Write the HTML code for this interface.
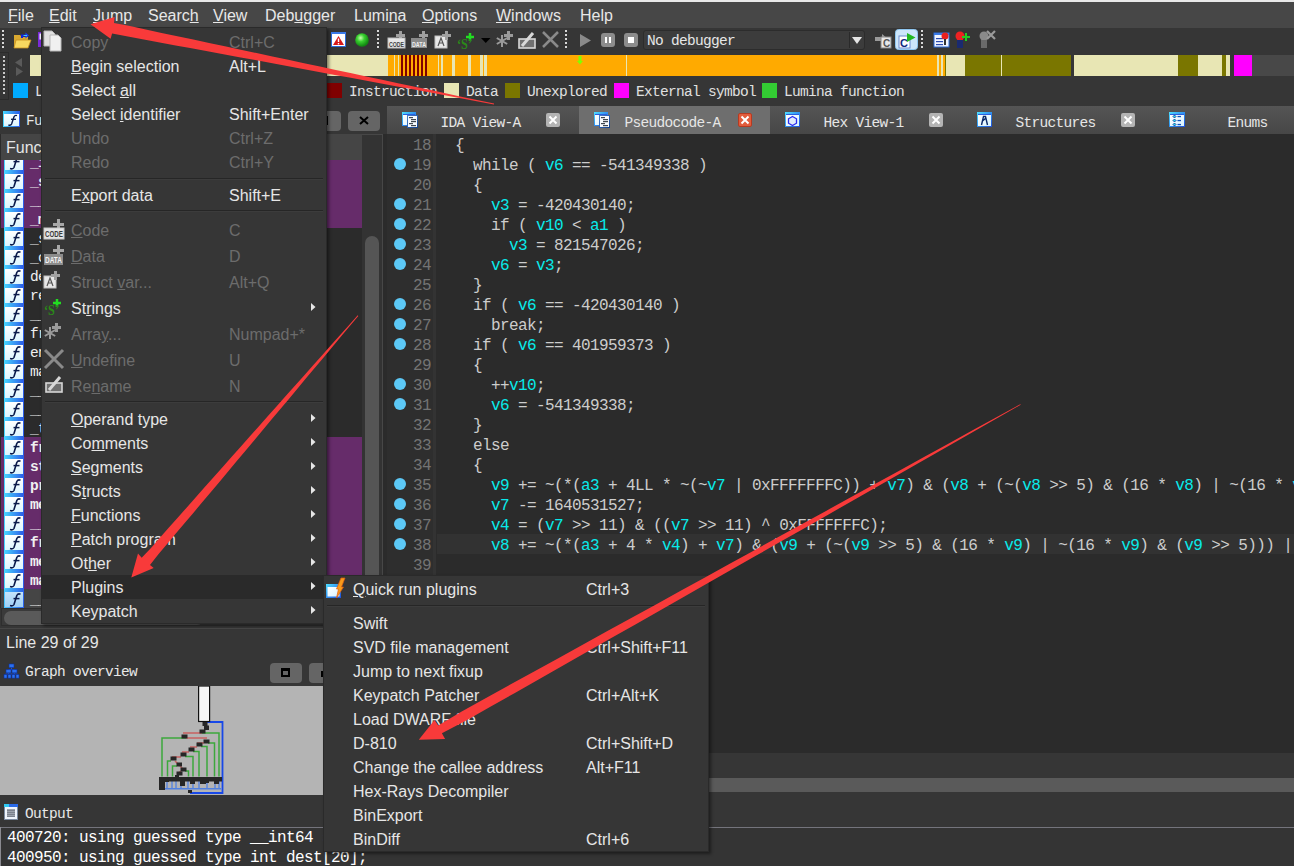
<!DOCTYPE html><html><head><meta charset="utf-8"><style>
*{margin:0;padding:0;box-sizing:border-box}
html,body{width:1294px;height:866px;overflow:hidden;background:#363636;font-family:"Liberation Sans",sans-serif}
.a{position:absolute}
.t{position:absolute;white-space:pre;line-height:20px}
.mono{font-family:"Liberation Mono",monospace}
.ui{font-family:"Liberation Mono",monospace;font-size:14.5px;letter-spacing:-0.7px}
.om{font-family:"Liberation Mono",monospace;font-size:16px;letter-spacing:-0.6px}
.u{text-decoration:underline;text-underline-offset:1px}
.mi{position:absolute;white-space:pre;font-size:16px;line-height:24px;color:#e6e6e6}
.dis{color:#6c6c6c}
.code{position:absolute;white-space:pre;font-family:"Liberation Mono",monospace;font-size:16px;letter-spacing:-0.6px;line-height:20px;color:#cdcdcd}
.v{color:#08eaea}
.ln{position:absolute;white-space:pre;font-family:"Liberation Mono",monospace;font-size:16px;letter-spacing:-0.6px;line-height:20px;color:#747474;text-align:right;width:46px}
.dot{position:absolute;width:12px;height:12px;border-radius:50%;background:#5cc8f6}
.sq{position:absolute;width:15px;height:15px}
.lg{position:absolute;white-space:pre;font-family:"Liberation Mono",monospace;font-size:14.5px;letter-spacing:-0.7px;line-height:20px;color:#e0e0e0}
</style></head><body>
<div class="a" style="left:0px;top:0px;width:1294px;height:2px;background:#e9e9e9;"></div>
<div class="a" style="left:0px;top:2px;width:1294px;height:26px;background:#474747;"></div>
<div class="mi" style="left:8px;top:4px;color:#e8e8e8"><span class="u">F</span>ile</div>
<div class="mi" style="left:49px;top:4px;color:#e8e8e8"><span class="u">E</span>dit</div>
<div class="mi" style="left:93px;top:4px;color:#e8e8e8"><span class="u">J</span>ump</div>
<div class="mi" style="left:148px;top:4px;color:#e8e8e8">Searc<span class="u">h</span></div>
<div class="mi" style="left:213px;top:4px;color:#e8e8e8"><span class="u">V</span>iew</div>
<div class="mi" style="left:265px;top:4px;color:#e8e8e8">Deb<span class="u">u</span>gger</div>
<div class="mi" style="left:354px;top:4px;color:#e8e8e8">Lumi<span class="u">n</span>a</div>
<div class="mi" style="left:422px;top:4px;color:#e8e8e8"><span class="u">O</span>ptions</div>
<div class="mi" style="left:496px;top:4px;color:#e8e8e8"><span class="u">W</span>indows</div>
<div class="mi" style="left:580px;top:4px;color:#e8e8e8">Help</div>
<div class="a" style="left:0px;top:28px;width:1294px;height:27px;background:#363636;"></div>
<div class="a" style="left:0px;top:55px;width:1294px;height:21px;background:#363636;"></div>
<div class="a" style="left:0px;top:52px;width:9px;height:48px;background:#363636;border:1px solid #2c2c2c;border-left:none"></div>
<div class="a" style="left:3px;top:56px;width:2px;height:40px;background:repeating-linear-gradient(#c8c8c8 0 2px,transparent 2px 4px)"></div>
<div class="a" style="left:30px;top:55px;width:358px;height:21px;background:#e8e6b4;"></div>
<div class="a" style="left:388px;top:55px;width:557px;height:21px;background:#ffaa00;"></div>
<div class="a" style="left:945px;top:55px;width:1px;height:21px;background:#7a7600;"></div>
<div class="a" style="left:946px;top:55px;width:19px;height:21px;background:#e8e6b4;"></div>
<div class="a" style="left:965px;top:55px;width:106px;height:21px;background:#7a7600;"></div>
<div class="a" style="left:1074px;top:55px;width:104px;height:21px;background:#e8e6b4;"></div>
<div class="a" style="left:1178px;top:55px;width:20px;height:21px;background:#7a7600;"></div>
<div class="a" style="left:1198px;top:55px;width:24px;height:21px;background:#e8e6b4;"></div>
<div class="a" style="left:1222px;top:55px;width:4px;height:21px;background:#7a7600;"></div>
<div class="a" style="left:1226px;top:55px;width:4px;height:21px;background:#e8e6b4;"></div>
<div class="a" style="left:1234px;top:55px;width:18px;height:21px;background:#ff00ff;"></div>
<div class="a" style="left:1252px;top:55px;width:42px;height:21px;background:#484848;"></div>
<div class="a" style="left:394px;top:55px;width:1px;height:21px;background:#e8e6b4;"></div>
<div class="a" style="left:398px;top:55px;width:1px;height:21px;background:#e8e6b4;"></div>
<div class="a" style="left:438px;top:55px;width:1px;height:21px;background:#e8e6b4;"></div>
<div class="a" style="left:440.5px;top:55px;width:2.5px;height:21px;background:#e8e6b4;"></div>
<div class="a" style="left:452px;top:55px;width:3px;height:21px;background:#e8e6b4;"></div>
<div class="a" style="left:468px;top:55px;width:3px;height:21px;background:#e8e6b4;"></div>
<div class="a" style="left:480px;top:55px;width:3px;height:21px;background:#e8e6b4;"></div>
<div class="a" style="left:484px;top:55px;width:3px;height:21px;background:#e8e6b4;"></div>
<div class="a" style="left:626px;top:55px;width:1px;height:21px;background:#e8e6b4;"></div>
<div class="a" style="left:937px;top:55px;width:2px;height:21px;background:#e8e6b4;"></div>
<div class="a" style="left:941px;top:55px;width:1.5px;height:21px;background:#e8e6b4;"></div>
<div class="a" style="left:1001px;top:55px;width:1px;height:21px;background:#e8e6b4;"></div>
<div class="a" style="left:401px;top:55px;width:2px;height:21px;background:#800000;"></div>
<div class="a" style="left:405px;top:55px;width:2px;height:21px;background:#800000;"></div>
<div class="a" style="left:409px;top:55px;width:2px;height:21px;background:#800000;"></div>
<div class="a" style="left:413px;top:55px;width:2px;height:21px;background:#800000;"></div>
<div class="a" style="left:417px;top:55px;width:2px;height:21px;background:#800000;"></div>
<div class="a" style="left:421px;top:55px;width:2px;height:21px;background:#800000;"></div>
<div class="a" style="left:425px;top:55px;width:2px;height:21px;background:#800000;"></div>
<svg class="a" style="left:576px;top:55px" width="8" height="10"><path d="M2.5 1 H5.5 V6 H7 L4 9.5 L1 6 H2.5Z" fill="#80ff00"/></svg>
<svg class="a" style="left:12px;top:56px" width="14" height="20"><path d="M10 2 L3 6.5 L10 11Z" fill="#5a5a5a"/><path d="M4 11 L11 15.5 L4 20Z" fill="#5a5a5a"/></svg>
<div class="sq" style="left:13px;top:83px;background:#00aaff"></div>
<div class="lg" style="left:35px;top:82px">Library function</div>
<div class="sq" style="left:327px;top:83px;background:#800000"></div>
<div class="lg" style="left:349px;top:82px">Instruction</div>
<div class="sq" style="left:444px;top:83px;background:#e8e6b4"></div>
<div class="lg" style="left:466px;top:82px">Data</div>
<div class="sq" style="left:505px;top:83px;background:#7a7600"></div>
<div class="lg" style="left:527px;top:82px">Unexplored</div>
<div class="sq" style="left:614px;top:83px;background:#ff00ff"></div>
<div class="lg" style="left:636px;top:82px">External symbol</div>
<div class="sq" style="left:762px;top:83px;background:#33cc33"></div>
<div class="lg" style="left:784px;top:82px">Lumina function</div>
<div class="a" style="left:0px;top:106px;width:387px;height:28px;background:#363636;"></div>
<div class="a" style="left:3px;top:111px;width:17px;height:16px;background:linear-gradient(90deg,#48d8ff,#2a5ae8)"><div class="a" style="left:1px;top:3px;width:15px;height:12px;background:linear-gradient(#ffffff,#dcf6ff)"></div></div>
<svg class="a" style="left:3px;top:111px" width="17" height="16"><path d="M14 4.6 Q12 3.8 11 5.8 L8.6 13 Q7.8 14.8 5.4 14" stroke="#0a1a4a" stroke-width="1.4" fill="none"/><path d="M8 8.3 H13" stroke="#0a1a4a" stroke-width="1.3"/></svg>
<div class="t ui" style="left:26px;top:111px;color:#e8e8e8">Functions</div>
<div class="a" style="left:270px;top:111px;width:71px;height:20px;background:#656565;border-radius:4px"></div>
<div class="a" style="left:348px;top:111px;width:32px;height:20px;background:#656565;border-radius:4px"></div>
<svg class="a" style="left:0;top:100px" width="400" height="40" viewBox="0 100 400 40"><rect x="318" y="117" width="9" height="7" fill="none" stroke="#000" stroke-width="2"/><path d="M360 117 L368 124 M368 117 L360 124" stroke="#000" stroke-width="2"/></svg>
<div class="a" style="left:0px;top:134px;width:383px;height:475px;background:#2b2b2b;"></div>
<div class="a" style="left:1px;top:134px;width:361px;height:26px;background:#454545;"></div>
<div class="t" style="left:6px;top:138px;font-size:16px;color:#e6e6e6">Function name</div>
<div class="a" style="left:362px;top:134px;width:21px;height:475px;background:#333333;border:1px solid #474747;border-left:none"></div>
<div class="a" style="left:365px;top:236px;width:14px;height:370px;background:#555555;border-radius:7px"></div>
<div class="a" style="left:1px;top:160px;width:361px;height:11px;background:#662c6a;"></div>
<div class="a" style="left:1px;top:171px;width:361px;height:19px;background:#662c6a;"></div>
<div class="a" style="left:1px;top:190px;width:361px;height:19px;background:#662c6a;"></div>
<div class="a" style="left:1px;top:209px;width:361px;height:19px;background:#662c6a;"></div>
<div class="a" style="left:1px;top:437px;width:361px;height:19px;background:#662c6a;"></div>
<div class="a" style="left:1px;top:456px;width:361px;height:19px;background:#662c6a;"></div>
<div class="a" style="left:1px;top:475px;width:361px;height:19px;background:#662c6a;"></div>
<div class="a" style="left:1px;top:494px;width:361px;height:19px;background:#662c6a;"></div>
<div class="a" style="left:1px;top:513px;width:361px;height:19px;background:#662c6a;"></div>
<div class="a" style="left:1px;top:532px;width:361px;height:19px;background:#662c6a;"></div>
<div class="a" style="left:1px;top:551px;width:361px;height:19px;background:#662c6a;"></div>
<div class="a" style="left:1px;top:570px;width:361px;height:19px;background:#662c6a;"></div>
<div class="a" style="left:1px;top:589px;width:361px;height:19px;background:#454545;"></div>
<div class="a" style="left:0;top:160px;width:362px;height:449px;overflow:hidden">
<div class="a" style="left:4px;top:-8px;width:20px;height:19px;background:linear-gradient(90deg,#48d8ff,#2a5ae8)"><div class="a" style="left:1px;top:3px;width:18px;height:15px;background:linear-gradient(#ffffff,#dcf6ff)"></div></div>
<svg class="a" style="left:4px;top:-8px" width="20" height="19"><path d="M16.5 5.2 Q14 4.2 12.8 6.5 L10 15.5 Q9 17.5 6 16.6" stroke="#0a1a4a" stroke-width="1.6" fill="none"/><path d="M9.5 9.6 H15.5" stroke="#0a1a4a" stroke-width="1.5"/></svg>
<div class="t ui" style="left:30px;top:-6px;line-height:19px;color:#f0f0f0;font-weight:bold;">_init_proc</div>
<div class="a" style="left:4px;top:11px;width:20px;height:19px;background:linear-gradient(90deg,#48d8ff,#2a5ae8)"><div class="a" style="left:1px;top:3px;width:18px;height:15px;background:linear-gradient(#ffffff,#dcf6ff)"></div></div>
<svg class="a" style="left:4px;top:11px" width="20" height="19"><path d="M16.5 5.2 Q14 4.2 12.8 6.5 L10 15.5 Q9 17.5 6 16.6" stroke="#0a1a4a" stroke-width="1.6" fill="none"/><path d="M9.5 9.6 H15.5" stroke="#0a1a4a" stroke-width="1.5"/></svg>
<div class="t ui" style="left:30px;top:13px;line-height:19px;color:#f0f0f0;font-weight:bold;">_strlen</div>
<div class="a" style="left:4px;top:30px;width:20px;height:19px;background:linear-gradient(90deg,#48d8ff,#2a5ae8)"><div class="a" style="left:1px;top:3px;width:18px;height:15px;background:linear-gradient(#ffffff,#dcf6ff)"></div></div>
<svg class="a" style="left:4px;top:30px" width="20" height="19"><path d="M16.5 5.2 Q14 4.2 12.8 6.5 L10 15.5 Q9 17.5 6 16.6" stroke="#0a1a4a" stroke-width="1.6" fill="none"/><path d="M9.5 9.6 H15.5" stroke="#0a1a4a" stroke-width="1.5"/></svg>
<div class="t ui" style="left:30px;top:32px;line-height:19px;color:#f0f0f0;font-weight:bold;">__libc_start_main</div>
<div class="a" style="left:4px;top:49px;width:20px;height:19px;background:linear-gradient(90deg,#48d8ff,#2a5ae8)"><div class="a" style="left:1px;top:3px;width:18px;height:15px;background:linear-gradient(#ffffff,#dcf6ff)"></div></div>
<svg class="a" style="left:4px;top:49px" width="20" height="19"><path d="M16.5 5.2 Q14 4.2 12.8 6.5 L10 15.5 Q9 17.5 6 16.6" stroke="#0a1a4a" stroke-width="1.6" fill="none"/><path d="M9.5 9.6 H15.5" stroke="#0a1a4a" stroke-width="1.5"/></svg>
<div class="t ui" style="left:30px;top:51px;line-height:19px;color:#f0f0f0;font-weight:bold;">_memset</div>
<div class="a" style="left:4px;top:68px;width:20px;height:19px;background:linear-gradient(90deg,#48d8ff,#2a5ae8)"><div class="a" style="left:1px;top:3px;width:18px;height:15px;background:linear-gradient(#ffffff,#dcf6ff)"></div></div>
<svg class="a" style="left:4px;top:68px" width="20" height="19"><path d="M16.5 5.2 Q14 4.2 12.8 6.5 L10 15.5 Q9 17.5 6 16.6" stroke="#0a1a4a" stroke-width="1.6" fill="none"/><path d="M9.5 9.6 H15.5" stroke="#0a1a4a" stroke-width="1.5"/></svg>
<div class="t ui" style="left:30px;top:70px;line-height:19px;color:#f0f0f0;">_strcpy</div>
<div class="a" style="left:4px;top:87px;width:20px;height:19px;background:linear-gradient(90deg,#48d8ff,#2a5ae8)"><div class="a" style="left:1px;top:3px;width:18px;height:15px;background:linear-gradient(#ffffff,#dcf6ff)"></div></div>
<svg class="a" style="left:4px;top:87px" width="20" height="19"><path d="M16.5 5.2 Q14 4.2 12.8 6.5 L10 15.5 Q9 17.5 6 16.6" stroke="#0a1a4a" stroke-width="1.6" fill="none"/><path d="M9.5 9.6 H15.5" stroke="#0a1a4a" stroke-width="1.5"/></svg>
<div class="t ui" style="left:30px;top:89px;line-height:19px;color:#f0f0f0;">_calloc</div>
<div class="a" style="left:4px;top:106px;width:20px;height:19px;background:linear-gradient(90deg,#48d8ff,#2a5ae8)"><div class="a" style="left:1px;top:3px;width:18px;height:15px;background:linear-gradient(#ffffff,#dcf6ff)"></div></div>
<svg class="a" style="left:4px;top:106px" width="20" height="19"><path d="M16.5 5.2 Q14 4.2 12.8 6.5 L10 15.5 Q9 17.5 6 16.6" stroke="#0a1a4a" stroke-width="1.6" fill="none"/><path d="M9.5 9.6 H15.5" stroke="#0a1a4a" stroke-width="1.5"/></svg>
<div class="t ui" style="left:30px;top:108px;line-height:19px;color:#f0f0f0;">deregister_tm_clones</div>
<div class="a" style="left:4px;top:125px;width:20px;height:19px;background:linear-gradient(90deg,#48d8ff,#2a5ae8)"><div class="a" style="left:1px;top:3px;width:18px;height:15px;background:linear-gradient(#ffffff,#dcf6ff)"></div></div>
<svg class="a" style="left:4px;top:125px" width="20" height="19"><path d="M16.5 5.2 Q14 4.2 12.8 6.5 L10 15.5 Q9 17.5 6 16.6" stroke="#0a1a4a" stroke-width="1.6" fill="none"/><path d="M9.5 9.6 H15.5" stroke="#0a1a4a" stroke-width="1.5"/></svg>
<div class="t ui" style="left:30px;top:127px;line-height:19px;color:#f0f0f0;">register_tm_clones</div>
<div class="a" style="left:4px;top:144px;width:20px;height:19px;background:linear-gradient(90deg,#48d8ff,#2a5ae8)"><div class="a" style="left:1px;top:3px;width:18px;height:15px;background:linear-gradient(#ffffff,#dcf6ff)"></div></div>
<svg class="a" style="left:4px;top:144px" width="20" height="19"><path d="M16.5 5.2 Q14 4.2 12.8 6.5 L10 15.5 Q9 17.5 6 16.6" stroke="#0a1a4a" stroke-width="1.6" fill="none"/><path d="M9.5 9.6 H15.5" stroke="#0a1a4a" stroke-width="1.5"/></svg>
<div class="t ui" style="left:30px;top:146px;line-height:19px;color:#f0f0f0;">__do_global_dtors_aux</div>
<div class="a" style="left:4px;top:163px;width:20px;height:19px;background:linear-gradient(90deg,#48d8ff,#2a5ae8)"><div class="a" style="left:1px;top:3px;width:18px;height:15px;background:linear-gradient(#ffffff,#dcf6ff)"></div></div>
<svg class="a" style="left:4px;top:163px" width="20" height="19"><path d="M16.5 5.2 Q14 4.2 12.8 6.5 L10 15.5 Q9 17.5 6 16.6" stroke="#0a1a4a" stroke-width="1.6" fill="none"/><path d="M9.5 9.6 H15.5" stroke="#0a1a4a" stroke-width="1.5"/></svg>
<div class="t ui" style="left:30px;top:165px;line-height:19px;color:#f0f0f0;">frame_dummy</div>
<div class="a" style="left:4px;top:182px;width:20px;height:19px;background:linear-gradient(90deg,#48d8ff,#2a5ae8)"><div class="a" style="left:1px;top:3px;width:18px;height:15px;background:linear-gradient(#ffffff,#dcf6ff)"></div></div>
<svg class="a" style="left:4px;top:182px" width="20" height="19"><path d="M16.5 5.2 Q14 4.2 12.8 6.5 L10 15.5 Q9 17.5 6 16.6" stroke="#0a1a4a" stroke-width="1.6" fill="none"/><path d="M9.5 9.6 H15.5" stroke="#0a1a4a" stroke-width="1.5"/></svg>
<div class="t ui" style="left:30px;top:184px;line-height:19px;color:#f0f0f0;">encrypt</div>
<div class="a" style="left:4px;top:201px;width:20px;height:19px;background:linear-gradient(90deg,#48d8ff,#2a5ae8)"><div class="a" style="left:1px;top:3px;width:18px;height:15px;background:linear-gradient(#ffffff,#dcf6ff)"></div></div>
<svg class="a" style="left:4px;top:201px" width="20" height="19"><path d="M16.5 5.2 Q14 4.2 12.8 6.5 L10 15.5 Q9 17.5 6 16.6" stroke="#0a1a4a" stroke-width="1.6" fill="none"/><path d="M9.5 9.6 H15.5" stroke="#0a1a4a" stroke-width="1.5"/></svg>
<div class="t ui" style="left:30px;top:203px;line-height:19px;color:#f0f0f0;">main</div>
<div class="a" style="left:4px;top:220px;width:20px;height:19px;background:linear-gradient(90deg,#48d8ff,#2a5ae8)"><div class="a" style="left:1px;top:3px;width:18px;height:15px;background:linear-gradient(#ffffff,#dcf6ff)"></div></div>
<svg class="a" style="left:4px;top:220px" width="20" height="19"><path d="M16.5 5.2 Q14 4.2 12.8 6.5 L10 15.5 Q9 17.5 6 16.6" stroke="#0a1a4a" stroke-width="1.6" fill="none"/><path d="M9.5 9.6 H15.5" stroke="#0a1a4a" stroke-width="1.5"/></svg>
<div class="t ui" style="left:30px;top:222px;line-height:19px;color:#f0f0f0;">__libc_csu_init</div>
<div class="a" style="left:4px;top:239px;width:20px;height:19px;background:linear-gradient(90deg,#48d8ff,#2a5ae8)"><div class="a" style="left:1px;top:3px;width:18px;height:15px;background:linear-gradient(#ffffff,#dcf6ff)"></div></div>
<svg class="a" style="left:4px;top:239px" width="20" height="19"><path d="M16.5 5.2 Q14 4.2 12.8 6.5 L10 15.5 Q9 17.5 6 16.6" stroke="#0a1a4a" stroke-width="1.6" fill="none"/><path d="M9.5 9.6 H15.5" stroke="#0a1a4a" stroke-width="1.5"/></svg>
<div class="t ui" style="left:30px;top:241px;line-height:19px;color:#f0f0f0;">__libc_csu_fini</div>
<div class="a" style="left:4px;top:258px;width:20px;height:19px;background:linear-gradient(90deg,#48d8ff,#2a5ae8)"><div class="a" style="left:1px;top:3px;width:18px;height:15px;background:linear-gradient(#ffffff,#dcf6ff)"></div></div>
<svg class="a" style="left:4px;top:258px" width="20" height="19"><path d="M16.5 5.2 Q14 4.2 12.8 6.5 L10 15.5 Q9 17.5 6 16.6" stroke="#0a1a4a" stroke-width="1.6" fill="none"/><path d="M9.5 9.6 H15.5" stroke="#0a1a4a" stroke-width="1.5"/></svg>
<div class="t ui" style="left:30px;top:260px;line-height:19px;color:#f0f0f0;">_term_proc</div>
<div class="a" style="left:4px;top:277px;width:20px;height:19px;background:linear-gradient(90deg,#48d8ff,#2a5ae8)"><div class="a" style="left:1px;top:3px;width:18px;height:15px;background:linear-gradient(#ffffff,#dcf6ff)"></div></div>
<svg class="a" style="left:4px;top:277px" width="20" height="19"><path d="M16.5 5.2 Q14 4.2 12.8 6.5 L10 15.5 Q9 17.5 6 16.6" stroke="#0a1a4a" stroke-width="1.6" fill="none"/><path d="M9.5 9.6 H15.5" stroke="#0a1a4a" stroke-width="1.5"/></svg>
<div class="t ui" style="left:30px;top:279px;line-height:19px;color:#f0f0f0;font-weight:bold;">free</div>
<div class="a" style="left:4px;top:296px;width:20px;height:19px;background:linear-gradient(90deg,#48d8ff,#2a5ae8)"><div class="a" style="left:1px;top:3px;width:18px;height:15px;background:linear-gradient(#ffffff,#dcf6ff)"></div></div>
<svg class="a" style="left:4px;top:296px" width="20" height="19"><path d="M16.5 5.2 Q14 4.2 12.8 6.5 L10 15.5 Q9 17.5 6 16.6" stroke="#0a1a4a" stroke-width="1.6" fill="none"/><path d="M9.5 9.6 H15.5" stroke="#0a1a4a" stroke-width="1.5"/></svg>
<div class="t ui" style="left:30px;top:298px;line-height:19px;color:#f0f0f0;font-weight:bold;">strlen</div>
<div class="a" style="left:4px;top:315px;width:20px;height:19px;background:linear-gradient(90deg,#48d8ff,#2a5ae8)"><div class="a" style="left:1px;top:3px;width:18px;height:15px;background:linear-gradient(#ffffff,#dcf6ff)"></div></div>
<svg class="a" style="left:4px;top:315px" width="20" height="19"><path d="M16.5 5.2 Q14 4.2 12.8 6.5 L10 15.5 Q9 17.5 6 16.6" stroke="#0a1a4a" stroke-width="1.6" fill="none"/><path d="M9.5 9.6 H15.5" stroke="#0a1a4a" stroke-width="1.5"/></svg>
<div class="t ui" style="left:30px;top:317px;line-height:19px;color:#f0f0f0;font-weight:bold;">printf</div>
<div class="a" style="left:4px;top:334px;width:20px;height:19px;background:linear-gradient(90deg,#48d8ff,#2a5ae8)"><div class="a" style="left:1px;top:3px;width:18px;height:15px;background:linear-gradient(#ffffff,#dcf6ff)"></div></div>
<svg class="a" style="left:4px;top:334px" width="20" height="19"><path d="M16.5 5.2 Q14 4.2 12.8 6.5 L10 15.5 Q9 17.5 6 16.6" stroke="#0a1a4a" stroke-width="1.6" fill="none"/><path d="M9.5 9.6 H15.5" stroke="#0a1a4a" stroke-width="1.5"/></svg>
<div class="t ui" style="left:30px;top:336px;line-height:19px;color:#f0f0f0;font-weight:bold;">memset</div>
<div class="a" style="left:4px;top:353px;width:20px;height:19px;background:linear-gradient(90deg,#48d8ff,#2a5ae8)"><div class="a" style="left:1px;top:3px;width:18px;height:15px;background:linear-gradient(#ffffff,#dcf6ff)"></div></div>
<svg class="a" style="left:4px;top:353px" width="20" height="19"><path d="M16.5 5.2 Q14 4.2 12.8 6.5 L10 15.5 Q9 17.5 6 16.6" stroke="#0a1a4a" stroke-width="1.6" fill="none"/><path d="M9.5 9.6 H15.5" stroke="#0a1a4a" stroke-width="1.5"/></svg>
<div class="t ui" style="left:30px;top:355px;line-height:19px;color:#f0f0f0;font-weight:bold;">__libc_start_main</div>
<div class="a" style="left:4px;top:372px;width:20px;height:19px;background:linear-gradient(90deg,#48d8ff,#2a5ae8)"><div class="a" style="left:1px;top:3px;width:18px;height:15px;background:linear-gradient(#ffffff,#dcf6ff)"></div></div>
<svg class="a" style="left:4px;top:372px" width="20" height="19"><path d="M16.5 5.2 Q14 4.2 12.8 6.5 L10 15.5 Q9 17.5 6 16.6" stroke="#0a1a4a" stroke-width="1.6" fill="none"/><path d="M9.5 9.6 H15.5" stroke="#0a1a4a" stroke-width="1.5"/></svg>
<div class="t ui" style="left:30px;top:374px;line-height:19px;color:#f0f0f0;font-weight:bold;">fread</div>
<div class="a" style="left:4px;top:391px;width:20px;height:19px;background:linear-gradient(90deg,#48d8ff,#2a5ae8)"><div class="a" style="left:1px;top:3px;width:18px;height:15px;background:linear-gradient(#ffffff,#dcf6ff)"></div></div>
<svg class="a" style="left:4px;top:391px" width="20" height="19"><path d="M16.5 5.2 Q14 4.2 12.8 6.5 L10 15.5 Q9 17.5 6 16.6" stroke="#0a1a4a" stroke-width="1.6" fill="none"/><path d="M9.5 9.6 H15.5" stroke="#0a1a4a" stroke-width="1.5"/></svg>
<div class="t ui" style="left:30px;top:393px;line-height:19px;color:#f0f0f0;font-weight:bold;">memcpy</div>
<div class="a" style="left:4px;top:410px;width:20px;height:19px;background:linear-gradient(90deg,#48d8ff,#2a5ae8)"><div class="a" style="left:1px;top:3px;width:18px;height:15px;background:linear-gradient(#ffffff,#dcf6ff)"></div></div>
<svg class="a" style="left:4px;top:410px" width="20" height="19"><path d="M16.5 5.2 Q14 4.2 12.8 6.5 L10 15.5 Q9 17.5 6 16.6" stroke="#0a1a4a" stroke-width="1.6" fill="none"/><path d="M9.5 9.6 H15.5" stroke="#0a1a4a" stroke-width="1.5"/></svg>
<div class="t ui" style="left:30px;top:412px;line-height:19px;color:#f0f0f0;font-weight:bold;">malloc</div>
<div class="a" style="left:4px;top:429px;width:20px;height:19px;background:linear-gradient(90deg,#48c8ff,#2a60e8)"><div class="a" style="left:1px;top:3px;width:18px;height:15px;background:linear-gradient(#c4e4fa,#a0d0f4)"></div></div>
<svg class="a" style="left:4px;top:429px" width="20" height="19"><path d="M16.5 5.2 Q14 4.2 12.8 6.5 L10 15.5 Q9 17.5 6 16.6" stroke="#0a1a4a" stroke-width="1.6" fill="none"/><path d="M9.5 9.6 H15.5" stroke="#0a1a4a" stroke-width="1.5"/></svg>
<div class="t ui" style="left:30px;top:431px;line-height:19px;color:#f0f0f0;">__gmon_start__</div>
</div>
<div class="a" style="left:0px;top:608px;width:383px;height:20px;background:#363636;"></div>
<div class="a" style="left:1px;top:608px;width:381px;height:18px;background:#3a3a3a;border:1px solid #2e2e2e"></div>
<div class="a" style="left:4px;top:611px;width:200px;height:14px;background:#5a5a5a;border-radius:7px"></div>
<div class="a" style="left:0px;top:626px;width:387px;height:34px;background:#363636;"></div>
<div class="a" style="left:0px;top:628px;width:383px;height:1px;background:#464646;"></div>
<div class="t" style="left:6px;top:633px;font-size:16px;color:#e6e6e6">Line 29 of 29</div>
<svg class="a" style="left:0;top:660px" width="24" height="24" viewBox="0 660 24 24"><g stroke="#1a50d0" stroke-width="1" fill="none"><path d="M11.5 667 V669 M8.5 669.5 H14.5 M8.5 673 V674 M14.5 673 V674 M5.5 674 H17.5"/></g><g fill="#2a70f0" stroke="#0a30a0" stroke-width="0.6"><rect x="9" y="664" width="5" height="3.6"/><rect x="6" y="669.5" width="5" height="3.4"/><rect x="12" y="669.5" width="5" height="3.4"/><rect x="4" y="674.5" width="3" height="3.6"/><rect x="8" y="674.5" width="3" height="3.6"/><rect x="12" y="674.5" width="3" height="3.6"/><rect x="16" y="674.5" width="3" height="3.6"/></g></svg>
<div class="t ui" style="left:25px;top:662px;color:#e8e8e8">Graph overview</div>
<div class="a" style="left:270px;top:663px;width:32px;height:20px;background:#656565;border-radius:4px"></div>
<div class="a" style="left:309px;top:663px;width:32px;height:20px;background:#656565;border-radius:4px"></div>
<div class="a" style="left:281px;top:668px;width:9px;height:9px;border:2px solid #000;border-top-width:3px"></div>
<div class="a" style="left:321px;top:671px;width:8px;height:6px;border:2px solid #000"></div>
<div class="a" style="left:0px;top:686px;width:387px;height:109px;background:#b4b4b4;"></div>
<svg class="a" style="left:0;top:686px" width="387" height="109" viewBox="0 686 387 109"><path d="M207 722 H222.5 V793 H190" stroke="#1848e8" stroke-width="1.8" fill="none"/><path d="M202 733 H219 V776.5" stroke="#3ca83c" stroke-width="1.5" fill="none"/><path d="M186 738 H162 V776.5" stroke="#3ca83c" stroke-width="1.5" fill="none"/><path d="M208 743 H214.5 V776.5" stroke="#3ca83c" stroke-width="1.5" fill="none"/><path d="M201 746.5 H207 V776.5" stroke="#3ca83c" stroke-width="1.5" fill="none"/><path d="M193 751.5 H199 V776.5" stroke="#3ca83c" stroke-width="1.5" fill="none"/><path d="M185 756.5 H193 V776.5" stroke="#3ca83c" stroke-width="1.5" fill="none"/><path d="M171 761 H167.5 V776.5" stroke="#3ca83c" stroke-width="1.5" fill="none"/><path d="M177 766 H172.5 V776.5" stroke="#3ca83c" stroke-width="1.5" fill="none"/><path d="M185 771 H188.5 V776.5" stroke="#3ca83c" stroke-width="1.5" fill="none"/><path d="M183 733 L202 733" stroke="#c86060" stroke-width="1.5"/><path d="M186 738 L207 738" stroke="#c86060" stroke-width="1.5"/><path d="M197 743 L204 743" stroke="#c86060" stroke-width="1.5"/><path d="M190 747 L197 747" stroke="#c86060" stroke-width="1.5"/><path d="M182 752 L189 752" stroke="#c86060" stroke-width="1.5"/><path d="M172 757 L181 757" stroke="#c86060" stroke-width="1.5"/><path d="M175 761 L179 765" stroke="#c86060" stroke-width="1.5"/><path d="M180 766 L184 770" stroke="#c86060" stroke-width="1.5"/><path d="M181 771 L177 774" stroke="#c86060" stroke-width="1.5"/><rect x="202.5" y="722" width="5" height="4" fill="#262626"/><rect x="204" y="725.5" width="5" height="4.5" fill="#262626"/><rect x="199.5" y="729.5" width="6" height="4" fill="#262626"/><rect x="181.5" y="734.5" width="6" height="4" fill="#262626"/><rect x="203.5" y="739.5" width="6" height="4" fill="#262626"/><rect x="196.5" y="742.5" width="6" height="4" fill="#262626"/><rect x="188.5" y="747.5" width="6" height="4" fill="#262626"/><rect x="180.5" y="752.5" width="6" height="4" fill="#262626"/><rect x="170.5" y="756.5" width="6" height="4" fill="#262626"/><rect x="176.5" y="762.5" width="5.5" height="4" fill="#262626"/><rect x="180.5" y="767.5" width="6" height="4" fill="#262626"/><rect x="176.5" y="771.5" width="6" height="4" fill="#262626"/><rect x="175" y="775" width="4" height="3" fill="#262626"/><path d="M167 781 V788.5" stroke="#5080e0" stroke-width="1.3"/><path d="M172 781 V788.5" stroke="#5080e0" stroke-width="1.3"/><path d="M176 781 V788.5" stroke="#5080e0" stroke-width="1.3"/><path d="M181 781 V788.5" stroke="#5080e0" stroke-width="1.3"/><path d="M188 781 V788.5" stroke="#5080e0" stroke-width="1.3"/><path d="M193 781 V788.5" stroke="#5080e0" stroke-width="1.3"/><path d="M199 781 V788.5" stroke="#5080e0" stroke-width="1.3"/><path d="M207 781 V788.5" stroke="#5080e0" stroke-width="1.3"/><path d="M215 781 V788.5" stroke="#5080e0" stroke-width="1.3"/><path d="M219 781 V788.5" stroke="#5080e0" stroke-width="1.3"/><path d="M162 788.7 H221" stroke="#5080e0" stroke-width="1.6"/><rect x="159" y="777" width="63" height="4.5" fill="#262626"/><rect x="159" y="777" width="6" height="13" fill="#262626"/><rect x="165" y="780" width="4" height="2" fill="#262626"/><rect x="180" y="780" width="5" height="6" fill="#262626"/><rect x="190" y="780" width="5" height="4" fill="#262626"/><rect x="200" y="780" width="6" height="4" fill="#262626"/><rect x="206" y="780" width="3" height="3" fill="#262626"/><rect x="214" y="780" width="5" height="4" fill="#262626"/><rect x="188" y="790" width="4" height="3" fill="#262626"/><rect x="198.6" y="686" width="11" height="35.5" fill="#f6f6f6" stroke="#101010" stroke-width="1.2"/></svg>
<div class="a" style="left:0px;top:795px;width:1294px;height:32px;background:#363636;"></div>
<svg class="a" style="left:0;top:800px" width="24" height="24" viewBox="0 800 24 24"><rect x="4.5" y="804.5" width="13" height="15" fill="#eef4fc" stroke="#7a8aa0"/><rect x="4" y="804" width="14" height="3" fill="#2a6ae8"/><rect x="4" y="804" width="5" height="3" fill="#30c8f0"/><g fill="#4a5260"><rect x="7" y="809.5" width="8" height="1.2"/><rect x="7" y="811.5" width="8" height="1.2"/><rect x="7" y="813.5" width="8" height="1.2"/><rect x="7" y="815.5" width="8" height="1.2"/></g></svg>
<div class="t ui" style="left:25px;top:804px;color:#e8e8e8">Output</div>
<div class="a" style="left:0px;top:827px;width:1294px;height:1px;background:#74747c;"></div>
<div class="a" style="left:0px;top:828px;width:1294px;height:38px;background:#343434;"></div>
<div class="a" style="left:0px;top:827px;width:1px;height:39px;background:#8a8a90;"></div>
<div class="t om" style="left:7px;top:828px;color:#ffffff">400720: using guessed type __int64 sub_400720(void);</div>
<div class="t om" style="left:7px;top:848px;color:#ffffff">400950: using guessed type int dest[20];</div>
<div class="a" style="left:387px;top:106px;width:907px;height:28px;background:linear-gradient(#555555,#474747);"></div>
<div class="t ui" style="left:440.5px;top:113px;color:#e6e6e6">IDA View-A</div>
<div class="a" style="left:546px;top:113px;width:14px;height:14px;background:#b4b4b4;border-radius:2px"></div>
<div class="a" style="left:579px;top:106px;width:191px;height:28px;background:#6e6e6e;"></div>
<div class="t ui" style="left:624.5px;top:113px;color:#e6e6e6">Pseudocode-A</div>
<div class="a" style="left:738px;top:113px;width:14px;height:14px;background:#e25c3c;border:1px solid #b83a20;border-radius:2px"></div>
<div class="t ui" style="left:823.5px;top:113px;color:#e6e6e6">Hex View-1</div>
<div class="a" style="left:929px;top:113px;width:14px;height:14px;background:#b4b4b4;border-radius:2px"></div>
<div class="t ui" style="left:1015.5px;top:113px;color:#e6e6e6">Structures</div>
<div class="a" style="left:1121px;top:113px;width:14px;height:14px;background:#b4b4b4;border-radius:2px"></div>
<div class="t ui" style="left:1227.5px;top:113px;color:#e6e6e6">Enums</div>
<div class="a" style="left:1313px;top:113px;width:14px;height:14px;background:#b4b4b4;border-radius:2px"></div>
<svg class="a" style="left:0;top:0" width="1294" height="140"><defs><linearGradient id="wb" x1="0" y1="0" x2="1" y2="1"><stop offset="0" stop-color="#50e0ff"/><stop offset="0.5" stop-color="#3090f0"/><stop offset="1" stop-color="#2050d8"/></linearGradient>
<linearGradient id="wbody" x1="0" y1="0" x2="1" y2="1"><stop offset="0" stop-color="#ffffff"/><stop offset="1" stop-color="#d8f4ff"/></linearGradient>
<linearGradient id="dk" x1="0" y1="0" x2="1" y2="1"><stop offset="0" stop-color="#4a80d0"/><stop offset="1" stop-color="#10408a"/></linearGradient></defs><rect x="402" y="112" width="14" height="14" fill="url(#wb)"/><rect x="403" y="114" width="12" height="1" fill="#2a60e0"/><rect x="403" y="115" width="12" height="10" fill="url(#wbody)"/><rect x="407" y="115" width="11" height="13" fill="url(#dk)"/><rect x="408" y="116" width="9" height="11" fill="#f8fbff"/><rect x="409" y="117" width="4" height="1.2" fill="#404850"/><rect x="411" y="119" width="5" height="1.2" fill="#404850"/><rect x="411" y="121" width="5" height="1.2" fill="#404850"/><rect x="409" y="123" width="4" height="1.2" fill="#404850"/><rect x="411" y="125" width="5" height="1.2" fill="#404850"/><path d="M549.5 116.5 L556.5 123.5 M556.5 116.5 L549.5 123.5" stroke="#fff" stroke-width="2"/><rect x="594" y="112" width="14" height="14" fill="url(#wb)"/><rect x="595" y="114" width="12" height="1" fill="#2a60e0"/><rect x="595" y="115" width="12" height="10" fill="url(#wbody)"/><rect x="599" y="115" width="11" height="13" fill="url(#dk)"/><rect x="600" y="116" width="9" height="11" fill="#f8fbff"/><rect x="601" y="117" width="4" height="1.2" fill="#404850"/><rect x="603" y="119" width="5" height="1.2" fill="#404850"/><rect x="603" y="121" width="5" height="1.2" fill="#404850"/><rect x="601" y="123" width="4" height="1.2" fill="#404850"/><rect x="603" y="125" width="5" height="1.2" fill="#404850"/><path d="M741.5 116.5 L748.5 123.5 M748.5 116.5 L741.5 123.5" stroke="#fff" stroke-width="2"/><rect x="785" y="112" width="15" height="15" fill="url(#wb)"/><rect x="786" y="114" width="13" height="1" fill="#2a60e0"/><rect x="786" y="115" width="13" height="11" fill="url(#wbody)"/><path d="M792.5 116.5 L796.5 118.8 V123.2 L792.5 125.5 L788.5 123.2 V118.8Z" fill="#e0ecfc" stroke="#2a2af0" stroke-width="1.3"/><path d="M932.5 116.5 L939.5 123.5 M939.5 116.5 L932.5 123.5" stroke="#fff" stroke-width="2"/><rect x="977" y="112" width="15" height="15" fill="url(#wb)"/><rect x="978" y="114" width="13" height="1" fill="#2a60e0"/><rect x="978" y="115" width="13" height="11" fill="url(#wbody)"/><path d="M981.5 125 L983.5 116.5 H985.5 L987.5 125 M982.5 121 L986 118" stroke="#0a2a6a" stroke-width="1.4" fill="none"/><path d="M1124.5 116.5 L1131.5 123.5 M1131.5 116.5 L1124.5 123.5" stroke="#fff" stroke-width="2"/><rect x="1169" y="112" width="16" height="15" fill="url(#wb)"/><rect x="1170" y="114" width="14" height="1" fill="#2a60e0"/><rect x="1170" y="115" width="14" height="11" fill="url(#wbody)"/><path d="M1174.5 115.0 L1176 116.5 L1174.5 118.0 L1173 116.5Z" fill="#20e0f0" stroke="#0a2a90" stroke-width="0.8"/><rect x="1177.5" y="115.9" width="3.5" height="1.3" fill="#1050c0"/><path d="M1174.5 119.0 L1176 120.5 L1174.5 122.0 L1173 120.5Z" fill="#20e0f0" stroke="#0a2a90" stroke-width="0.8"/><rect x="1177.5" y="119.9" width="3.5" height="1.3" fill="#1050c0"/><path d="M1174.5 123.0 L1176 124.5 L1174.5 126.0 L1173 124.5Z" fill="#20e0f0" stroke="#0a2a90" stroke-width="0.8"/><rect x="1177.5" y="123.9" width="3.5" height="1.3" fill="#1050c0"/><path d="M1316.5 116.5 L1323.5 123.5 M1323.5 116.5 L1316.5 123.5" stroke="#fff" stroke-width="2"/></svg>
<div class="a" style="left:383px;top:134px;width:4px;height:619px;background:#2b2b2b;"></div>
<div class="a" style="left:387px;top:134px;width:907px;height:619px;background:#2b2b2b;"></div>
<div class="a" style="left:387px;top:134px;width:46px;height:619px;background:#2e2e2e;"></div>
<div class="a" style="left:433px;top:134px;width:3px;height:619px;background:#333333;"></div>
<div class="a" style="left:437px;top:534px;width:857px;height:20px;background:#323232;"></div>
<div class="ln" style="left:385px;top:136px">18</div>
<div class="code" style="left:437px;top:136px">  {</div>
<div class="ln" style="left:385px;top:156px">19</div>
<div class="dot" style="left:394px;top:158px"></div>
<div class="code" style="left:437px;top:156px">    while ( <span class="v">v6</span> == -541349338 )</div>
<div class="ln" style="left:385px;top:176px">20</div>
<div class="code" style="left:437px;top:176px">    {</div>
<div class="ln" style="left:385px;top:196px">21</div>
<div class="dot" style="left:394px;top:198px"></div>
<div class="code" style="left:437px;top:196px">      <span class="v">v3</span> = -420430140;</div>
<div class="ln" style="left:385px;top:216px">22</div>
<div class="dot" style="left:394px;top:218px"></div>
<div class="code" style="left:437px;top:216px">      if ( <span class="v">v10</span> &lt; <span class="v">a1</span> )</div>
<div class="ln" style="left:385px;top:236px">23</div>
<div class="dot" style="left:394px;top:238px"></div>
<div class="code" style="left:437px;top:236px">        <span class="v">v3</span> = 821547026;</div>
<div class="ln" style="left:385px;top:256px">24</div>
<div class="dot" style="left:394px;top:258px"></div>
<div class="code" style="left:437px;top:256px">      <span class="v">v6</span> = <span class="v">v3</span>;</div>
<div class="ln" style="left:385px;top:276px">25</div>
<div class="code" style="left:437px;top:276px">    }</div>
<div class="ln" style="left:385px;top:296px">26</div>
<div class="dot" style="left:394px;top:298px"></div>
<div class="code" style="left:437px;top:296px">    if ( <span class="v">v6</span> == -420430140 )</div>
<div class="ln" style="left:385px;top:316px">27</div>
<div class="dot" style="left:394px;top:318px"></div>
<div class="code" style="left:437px;top:316px">      break;</div>
<div class="ln" style="left:385px;top:336px">28</div>
<div class="dot" style="left:394px;top:338px"></div>
<div class="code" style="left:437px;top:336px">    if ( <span class="v">v6</span> == 401959373 )</div>
<div class="ln" style="left:385px;top:356px">29</div>
<div class="code" style="left:437px;top:356px">    {</div>
<div class="ln" style="left:385px;top:376px">30</div>
<div class="dot" style="left:394px;top:378px"></div>
<div class="code" style="left:437px;top:376px">      ++<span class="v">v10</span>;</div>
<div class="ln" style="left:385px;top:396px">31</div>
<div class="dot" style="left:394px;top:398px"></div>
<div class="code" style="left:437px;top:396px">      <span class="v">v6</span> = -541349338;</div>
<div class="ln" style="left:385px;top:416px">32</div>
<div class="code" style="left:437px;top:416px">    }</div>
<div class="ln" style="left:385px;top:436px">33</div>
<div class="code" style="left:437px;top:436px">    else</div>
<div class="ln" style="left:385px;top:456px">34</div>
<div class="code" style="left:437px;top:456px">    {</div>
<div class="ln" style="left:385px;top:476px">35</div>
<div class="dot" style="left:394px;top:478px"></div>
<div class="code" style="left:437px;top:476px">      <span class="v">v9</span> += ~(*(<span class="v">a3</span> + 4LL * ~(~<span class="v">v7</span> | 0xFFFFFFFC)) + <span class="v">v7</span>) &amp; (<span class="v">v8</span> + (~(<span class="v">v8</span> &gt;&gt; 5) &amp; (16 * <span class="v">v8</span>) | ~(16 * <span class="v">v8</span>) &amp; (<span class="v">v8</span> &gt;&gt; 5)));</div>
<div class="ln" style="left:385px;top:496px">36</div>
<div class="dot" style="left:394px;top:498px"></div>
<div class="code" style="left:437px;top:496px">      <span class="v">v7</span> -= 1640531527;</div>
<div class="ln" style="left:385px;top:516px">37</div>
<div class="dot" style="left:394px;top:518px"></div>
<div class="code" style="left:437px;top:516px">      <span class="v">v4</span> = (<span class="v">v7</span> &gt;&gt; 11) &amp; ((<span class="v">v7</span> &gt;&gt; 11) ^ 0xFFFFFFFC);</div>
<div class="ln" style="left:385px;top:536px">38</div>
<div class="dot" style="left:394px;top:538px"></div>
<div class="code" style="left:437px;top:536px">      <span class="v">v8</span> += ~(*(<span class="v">a3</span> + 4 * <span class="v">v4</span>) + <span class="v">v7</span>) &amp; (<span class="v">v9</span> + (~(<span class="v">v9</span> &gt;&gt; 5) &amp; (16 * <span class="v">v9</span>) | ~(16 * <span class="v">v9</span>) &amp; (<span class="v">v9</span> &gt;&gt; 5))) | (<span class="v">v9</span> + ~<span class="v">v7</span>);</div>
<div class="ln" style="left:385px;top:556px">39</div>
<div class="code" style="left:437px;top:556px"></div>
<div class="a" style="left:387px;top:753px;width:907px;height:25px;background:#363636;"></div>
<div class="a" style="left:387px;top:778px;width:907px;height:14px;background:#5a5a5a;"></div>
<div class="a" style="left:387px;top:792px;width:907px;height:3px;background:#363636;"></div>
<div class="a" style="left:643px;top:30px;width:222px;height:20px;background:#3c3c3c;border:1px solid #2c2c2c;border-radius:3px"></div>
<div class="t ui" style="left:647px;top:31px;color:#e6e6e6">No debugger</div>
<div class="a" style="left:849px;top:32px;width:1px;height:16px;background:#2a2a2a;"></div>
<svg class="a" style="left:851px;top:35px" width="12" height="10"><path d="M1 2 L11 2 L6 9Z" fill="#e6e6e6"/></svg>
<svg class="a" style="left:0;top:0" width="1294" height="60"><rect x="2" y="30" width="2" height="2" fill="#d8d8d8"/><rect x="2" y="34" width="2" height="2" fill="#d8d8d8"/><rect x="2" y="38" width="2" height="2" fill="#d8d8d8"/><rect x="2" y="42" width="2" height="2" fill="#d8d8d8"/><rect x="2" y="46" width="2" height="2" fill="#d8d8d8"/><path d="M14 35 H20 L22 37 H28 V47 H14Z" fill="#d8a830"/><path d="M16 40 H31 L28 48 H14Z" fill="#f8d860" stroke="#c89020" stroke-width="0.8"/><path d="M22 38 V35.5 H26.5" stroke="#1020e0" stroke-width="2" fill="none"/><path d="M25.5 32.5 L29 35.5 L25.5 38.5Z" fill="#1a40f0"/><path d="M23.5 35.5 H27" stroke="#40e0ff" stroke-width="0.9"/><rect x="38" y="32" width="4" height="15" fill="#7a2ad8"/><rect x="39.5" y="33.5" width="2.5" height="6" fill="#f0f0ff"/><rect x="331.5" y="32.5" width="14" height="14" fill="#ffffff" stroke="#2a6ad8"/><rect x="331" y="32" width="15" height="2" fill="#3a7ae8"/><path d="M338.5 36 L344 45 H333Z" fill="#d81818"/><path d="M338.5 38.5 V42" stroke="#fff" stroke-width="1.4"/><rect x="337.8" y="43" width="1.4" height="1.4" fill="#fff"/><defs><radialGradient id="gb" cx="0.4" cy="0.35" r="0.6"><stop offset="0" stop-color="#c8ffb0"/><stop offset="0.45" stop-color="#3ad030"/><stop offset="1" stop-color="#128a12"/></radialGradient></defs><circle cx="362" cy="40" r="6.8" fill="url(#gb)"/><rect x="377" y="30" width="2" height="2" fill="#d8d8d8"/><rect x="377" y="34" width="2" height="2" fill="#d8d8d8"/><rect x="377" y="38" width="2" height="2" fill="#d8d8d8"/><rect x="377" y="42" width="2" height="2" fill="#d8d8d8"/><rect x="377" y="46" width="2" height="2" fill="#d8d8d8"/><path d="M400.5 31 V40 M396 35.5 H405" stroke="#a0a0a0" stroke-width="3"/><rect x="388" y="38" width="17" height="10" fill="#e8e8e8" stroke="#bdbdbd" stroke-width="1"/><text x="396.5" y="46.5" font-family="Liberation Sans" font-size="8" font-weight="bold" text-anchor="middle" fill="#404040" textLength="15" lengthAdjust="spacingAndGlyphs">CODE</text><path d="M423.5 31 V40 M419 35.5 H428" stroke="#a0a0a0" stroke-width="3"/><rect x="411" y="38" width="16" height="10" fill="#8a8a8a"/><text x="419" y="46.5" font-family="Liberation Sans" font-size="8" font-weight="bold" text-anchor="middle" fill="#f0f0f0" textLength="14" lengthAdjust="spacingAndGlyphs">DATA</text><rect x="435" y="36" width="12" height="12" fill="#e8e8e8" stroke="#c0c0c0"/><path d="M438 46 L441 38 L444 46 M439 43 H443" stroke="#555" stroke-width="1.2" fill="none"/><path d="M446.5 31 V40 M442 35.5 H451" stroke="#a0a0a0" stroke-width="3"/><path d="M470.0 33 V41 M466 37.0 H474" stroke="#22dd22" stroke-width="2.5"/><text x="457" y="49" font-family="Liberation Serif" font-size="15" font-weight="bold" fill="#2a8a18" textLength="15" lengthAdjust="spacingAndGlyphs">‘S’</text><path d="M481 38 H490.5 L485.75 43Z" fill="#000"/><path d="M502.0 35.0 L502.0 47.0" stroke="#9a9a9a" stroke-width="2"/><path d="M496.8 38.0 L507.2 44.0" stroke="#9a9a9a" stroke-width="2"/><path d="M496.8 44.0 L507.2 38.0" stroke="#9a9a9a" stroke-width="2"/><path d="M508.5 31 V40 M504 35.5 H513" stroke="#9a9a9a" stroke-width="3"/><rect x="519" y="39" width="16" height="9" fill="#707070" stroke="#d8d8d8" stroke-width="1.6"/><path d="M522 46 L533 33" stroke="#d8d8d8" stroke-width="3"/><path d="M543 32 L558 47 M558 32 L543 47" stroke="#8a8a8a" stroke-width="2.5"/><rect x="565" y="30" width="2" height="2" fill="#d8d8d8"/><rect x="565" y="34" width="2" height="2" fill="#d8d8d8"/><rect x="565" y="38" width="2" height="2" fill="#d8d8d8"/><rect x="565" y="42" width="2" height="2" fill="#d8d8d8"/><rect x="565" y="46" width="2" height="2" fill="#d8d8d8"/><path d="M580 34 L591 40.5 L580 47Z" fill="#8a8a8a"/><rect x="601" y="33" width="14" height="14" rx="3" fill="#8c8c8c"/><rect x="605" y="37" width="2" height="6" fill="#fff"/><rect x="609" y="37" width="2" height="6" fill="#fff"/><rect x="624" y="33" width="14" height="14" rx="3" fill="#8c8c8c"/><rect x="628" y="37" width="6" height="6" fill="#fff"/><path d="M875 37 H882 V34 L888 39 L882 44 V41 H875Z" fill="#9a9a9a"/><rect x="881" y="37" width="10" height="11" fill="#e8e8e8" stroke="#888"/><text x="883" y="46.5" font-family="Liberation Sans" font-size="10" font-weight="bold" fill="#555">C</text><rect x="895.5" y="29.5" width="22" height="20" rx="3" fill="#cce6fb" stroke="#8ec6f0"/><rect x="899" y="36" width="11" height="12" fill="#fff" stroke="#6a8ad0"/><text x="900" y="46.5" font-family="Liberation Sans" font-size="11" font-weight="bold" fill="#102a80">C</text><path d="M907 33 L915.5 37.5 L907 42Z" fill="#22b822"/><rect x="921" y="30" width="2" height="2" fill="#d8d8d8"/><rect x="921" y="34" width="2" height="2" fill="#d8d8d8"/><rect x="921" y="38" width="2" height="2" fill="#d8d8d8"/><rect x="921" y="42" width="2" height="2" fill="#d8d8d8"/><rect x="921" y="46" width="2" height="2" fill="#d8d8d8"/><rect x="934" y="33" width="15" height="14" fill="#f0f4ff" stroke="#2a6ad8"/><rect x="934" y="33" width="15" height="2" fill="#3a7ae8"/><rect x="936" y="38" width="7" height="1.2" fill="#2a4ab0"/><rect x="936" y="41" width="7" height="1.2" fill="#2a4ab0"/><rect x="936" y="44" width="7" height="1.2" fill="#2a4ab0"/><circle cx="945" cy="36" r="3.5" fill="#e82020"/><rect x="944" y="39" width="2" height="6" fill="#333"/><circle cx="960" cy="36" r="4.5" fill="#ee2222"/><rect x="957" y="40" width="6" height="8" fill="#1a2a70"/><path d="M966 33 V41 M962 37 H970" stroke="#22cc22" stroke-width="2"/><circle cx="984" cy="36" r="4.5" fill="#8a8a8a"/><rect x="981" y="40" width="6" height="8" fill="#6a6a6a"/><path d="M987 31 L995 39 M995 31 L987 39" stroke="#9a9a9a" stroke-width="2.2"/></svg>
<div class="a" style="left:41px;top:27px;width:286px;height:597px;background:#363636;border:1px solid #2a2a2a;box-shadow:2px 2px 3px rgba(0,0,0,0.45)"></div>
<div class="a" style="left:45px;top:178px;width:278px;height:1px;background:#262626"></div>
<div class="a" style="left:45px;top:179px;width:278px;height:1px;background:#3c3c3c"></div>
<div class="a" style="left:45px;top:210px;width:278px;height:1px;background:#262626"></div>
<div class="a" style="left:45px;top:211px;width:278px;height:1px;background:#3c3c3c"></div>
<div class="a" style="left:45px;top:401px;width:278px;height:1px;background:#262626"></div>
<div class="a" style="left:45px;top:402px;width:278px;height:1px;background:#3c3c3c"></div>
<div class="a" style="left:42px;top:575px;width:284px;height:24px;background:#2a2a2a"></div>
<div class="mi dis" style="left:71px;top:31px;line-height:24px">Copy</div>
<div class="mi dis" style="left:229px;top:31px;line-height:24px">Ctrl+C</div>
<div class="mi" style="left:71px;top:55px;line-height:24px"><span class="u">B</span>egin selection</div>
<div class="mi" style="left:229px;top:55px;line-height:24px">Alt+L</div>
<div class="mi" style="left:71px;top:79px;line-height:24px">Select <span class="u">a</span>ll</div>
<div class="mi" style="left:71px;top:103px;line-height:24px">Select <span class="u">i</span>dentifier</div>
<div class="mi" style="left:229px;top:103px;line-height:24px">Shift+Enter</div>
<div class="mi dis" style="left:71px;top:127px;line-height:24px">Undo</div>
<div class="mi dis" style="left:229px;top:127px;line-height:24px">Ctrl+Z</div>
<div class="mi dis" style="left:71px;top:151px;line-height:24px">Redo</div>
<div class="mi dis" style="left:229px;top:151px;line-height:24px">Ctrl+Y</div>
<div class="mi" style="left:71px;top:184px;line-height:24px">E<span class="u">x</span>port data</div>
<div class="mi" style="left:229px;top:184px;line-height:24px">Shift+E</div>
<div class="mi dis" style="left:71px;top:218px;line-height:26px"><span class="u">C</span>ode</div>
<div class="mi dis" style="left:229px;top:218px;line-height:26px">C</div>
<div class="mi dis" style="left:71px;top:244px;line-height:26px"><span class="u">D</span>ata</div>
<div class="mi dis" style="left:229px;top:244px;line-height:26px">D</div>
<div class="mi dis" style="left:71px;top:270px;line-height:26px">Struct <span class="u">v</span>ar...</div>
<div class="mi dis" style="left:229px;top:270px;line-height:26px">Alt+Q</div>
<div class="mi" style="left:71px;top:296px;line-height:26px">St<span class="u">r</span>ings</div>
<svg class="a" style="left:310px;top:303px" width="7" height="9"><path d="M1 0 L5.5 4 L1 8Z" fill="#e6e6e6"/></svg>
<div class="mi dis" style="left:71px;top:322px;line-height:26px">Arra<span class="u">y</span>...</div>
<div class="mi dis" style="left:229px;top:322px;line-height:26px">Numpad+*</div>
<div class="mi dis" style="left:71px;top:348px;line-height:26px"><span class="u">U</span>ndefine</div>
<div class="mi dis" style="left:229px;top:348px;line-height:26px">U</div>
<div class="mi dis" style="left:71px;top:374px;line-height:26px">Re<span class="u">n</span>ame</div>
<div class="mi dis" style="left:229px;top:374px;line-height:26px">N</div>
<div class="mi" style="left:71px;top:408px;line-height:24px"><span class="u">O</span>perand type</div>
<svg class="a" style="left:310px;top:414px" width="7" height="9"><path d="M1 0 L5.5 4 L1 8Z" fill="#e6e6e6"/></svg>
<div class="mi" style="left:71px;top:432px;line-height:24px">Co<span class="u">m</span>ments</div>
<svg class="a" style="left:310px;top:438px" width="7" height="9"><path d="M1 0 L5.5 4 L1 8Z" fill="#e6e6e6"/></svg>
<div class="mi" style="left:71px;top:456px;line-height:24px"><span class="u">S</span>egments</div>
<svg class="a" style="left:310px;top:462px" width="7" height="9"><path d="M1 0 L5.5 4 L1 8Z" fill="#e6e6e6"/></svg>
<div class="mi" style="left:71px;top:480px;line-height:24px">S<span class="u">t</span>ructs</div>
<svg class="a" style="left:310px;top:486px" width="7" height="9"><path d="M1 0 L5.5 4 L1 8Z" fill="#e6e6e6"/></svg>
<div class="mi" style="left:71px;top:504px;line-height:24px"><span class="u">F</span>unctions</div>
<svg class="a" style="left:310px;top:510px" width="7" height="9"><path d="M1 0 L5.5 4 L1 8Z" fill="#e6e6e6"/></svg>
<div class="mi" style="left:71px;top:528px;line-height:24px"><span class="u">P</span>atch program</div>
<svg class="a" style="left:310px;top:534px" width="7" height="9"><path d="M1 0 L5.5 4 L1 8Z" fill="#e6e6e6"/></svg>
<div class="mi" style="left:71px;top:552px;line-height:24px">Ot<span class="u">h</span>er</div>
<svg class="a" style="left:310px;top:558px" width="7" height="9"><path d="M1 0 L5.5 4 L1 8Z" fill="#e6e6e6"/></svg>
<div class="mi" style="left:71px;top:576px;line-height:24px">Plugins</div>
<svg class="a" style="left:310px;top:582px" width="7" height="9"><path d="M1 0 L5.5 4 L1 8Z" fill="#e6e6e6"/></svg>
<div class="mi" style="left:71px;top:600px;line-height:24px">Keypatch</div>
<svg class="a" style="left:310px;top:606px" width="7" height="9"><path d="M1 0 L5.5 4 L1 8Z" fill="#e6e6e6"/></svg>
<svg class="a" style="left:0;top:0" width="400" height="420"><path d="M44 31 H52 L55 34 V46 H44Z" fill="#e0e0e0" stroke="#b8b8b8"/><path d="M50 35 H58 L61 38 V51 H50Z" fill="#f0f0f0" stroke="#b8b8b8"/><path d="M58.5 219 V230 M53 224.5 H64" stroke="#a8a8a8" stroke-width="3"/><rect x="44" y="228" width="20" height="11" fill="#e4e4e4" stroke="#c8c8c8" stroke-width="1"/><text x="54" y="237" font-family="Liberation Sans" font-size="9" font-weight="bold" text-anchor="middle" fill="#3a3a3a" textLength="18" lengthAdjust="spacingAndGlyphs">CODE</text><path d="M58.5 245 V256 M53 250.5 H64" stroke="#a8a8a8" stroke-width="3"/><rect x="44" y="254" width="19" height="11" fill="#8c8c8c"/><text x="53.5" y="263" font-family="Liberation Sans" font-size="9" font-weight="bold" text-anchor="middle" fill="#f4f4f4" textLength="17" lengthAdjust="spacingAndGlyphs">DATA</text><rect x="44" y="276" width="12" height="12" fill="#e8e8e8" stroke="#c0c0c0"/><path d="M47 286 L50 278 L53 286 M48 283 H52" stroke="#555" stroke-width="1.2" fill="none"/><path d="M55.5 271 V280 M51 275.5 H60" stroke="#a0a0a0" stroke-width="3"/><path d="M57.0 299 V307 M53 303.0 H61" stroke="#22dd22" stroke-width="2.5"/><text x="44" y="315" font-family="Liberation Serif" font-size="15" font-weight="bold" fill="#2a8a18" textLength="15" lengthAdjust="spacingAndGlyphs">‘S’</text><path d="M50.0 327.0 L50.0 339.0" stroke="#9a9a9a" stroke-width="2"/><path d="M44.8 330.0 L55.2 336.0" stroke="#9a9a9a" stroke-width="2"/><path d="M44.8 336.0 L55.2 330.0" stroke="#9a9a9a" stroke-width="2"/><path d="M56.5 323 V332 M52 327.5 H61" stroke="#9a9a9a" stroke-width="3"/><path d="M45 350 L63 368 M63 350 L45 368" stroke="#8a8a8a" stroke-width="3"/><rect x="46" y="383" width="16" height="9" fill="#707070" stroke="#d8d8d8" stroke-width="1.6"/><path d="M49 390 L60 377" stroke="#d8d8d8" stroke-width="3"/></svg>
<div class="a" style="left:323px;top:575px;width:386px;height:277px;background:#363636;border:1px solid #2a2a2a;box-shadow:2px 2px 3px rgba(0,0,0,0.45)"></div>
<div class="a" style="left:327px;top:605px;width:378px;height:1px;background:#262626"></div>
<div class="a" style="left:327px;top:606px;width:378px;height:1px;background:#3c3c3c"></div>
<div class="mi" style="left:353px;top:578px"><span class="u">Q</span>uick run plugins</div>
<div class="mi" style="left:586px;top:578px">Ctrl+3</div>
<div class="mi" style="left:353px;top:612px">Swift</div>
<div class="mi" style="left:353px;top:636px">SVD file management</div>
<div class="mi" style="left:586px;top:636px">Ctrl+Shift+F11</div>
<div class="mi" style="left:353px;top:660px">Jump to next fixup</div>
<div class="mi" style="left:353px;top:684px">Keypatch Patcher</div>
<div class="mi" style="left:586px;top:684px">Ctrl+Alt+K</div>
<div class="mi" style="left:353px;top:708px">Load DWARF file</div>
<div class="mi" style="left:353px;top:732px">D-810</div>
<div class="mi" style="left:586px;top:732px">Ctrl+Shift+D</div>
<div class="mi" style="left:353px;top:756px">Change the callee address</div>
<div class="mi" style="left:586px;top:756px">Alt+F11</div>
<div class="mi" style="left:353px;top:780px">Hex-Rays Decompiler</div>
<div class="mi" style="left:353px;top:804px">BinExport</div>
<div class="mi" style="left:353px;top:828px">BinDiff</div>
<div class="mi" style="left:586px;top:828px">Ctrl+6</div>
<svg class="a" style="left:320px;top:574px" width="30" height="30" viewBox="320 574 30 30"><defs><linearGradient id="wb2" x1="0" y1="0" x2="1" y2="1"><stop offset="0" stop-color="#50e0ff"/><stop offset="0.5" stop-color="#3090f0"/><stop offset="1" stop-color="#2050d8"/></linearGradient>
<linearGradient id="wbody2" x1="0" y1="0" x2="1" y2="1"><stop offset="0" stop-color="#ffffff"/><stop offset="1" stop-color="#d8f4ff"/></linearGradient>
<linearGradient id="dk2" x1="0" y1="0" x2="1" y2="1"><stop offset="0" stop-color="#4a80d0"/><stop offset="1" stop-color="#10408a"/></linearGradient></defs><rect x="326" y="584" width="15" height="14" fill="url(#wb2)"/><rect x="327.5" y="587" width="12" height="9.5" fill="url(#wbody2)"/><path d="M341 578 L345 578 L341.5 587 L343.5 587 L336.5 598 L338.5 589 L336.5 589Z" fill="#f89a1a" stroke="#e05a10" stroke-width="0.7"/></svg>
<svg class="a" style="left:0;top:0" width="1294" height="866"><path d="M90.5 24.2 L110.6 38.7 L112.1 33.4 L127.9 36.5 L143.8 39.4 L159.7 42.4 L175.6 45.4 L191.5 48.3 L207.5 51.3 L223.4 54.2 L239.3 57.2 L255.2 60.1 L271.1 63.1 L287.0 66.0 L302.9 69.0 L318.9 71.9 L334.8 74.9 L350.7 77.8 L366.6 80.8 L382.5 83.7 L398.4 86.7 L414.3 89.6 L430.3 92.6 L446.2 95.5 L462.1 98.5 L478.0 101.4 L493.9 104.4 L494.1 103.6 L478.2 100.2 L462.4 96.9 L446.6 93.5 L430.8 90.1 L414.9 86.8 L399.1 83.4 L383.3 80.0 L367.4 76.7 L351.6 73.3 L335.8 69.9 L319.9 66.6 L304.1 63.2 L288.3 59.8 L272.4 56.4 L256.6 53.1 L240.8 49.7 L224.9 46.3 L209.1 43.0 L193.3 39.6 L177.4 36.2 L161.6 32.9 L145.8 29.5 L130.0 26.1 L114.0 22.9 L114.6 17.1Z" fill="#f83a3a"/><path d="M131.3 577.4 L153.7 568.0 L150.0 565.0 L158.4 554.3 L167.1 544.0 L175.8 533.6 L184.5 523.3 L193.3 512.9 L202.0 502.6 L210.7 492.2 L219.4 481.9 L228.1 471.5 L236.8 461.1 L245.5 450.8 L254.1 440.4 L262.8 430.0 L271.5 419.6 L280.2 409.3 L288.9 398.9 L297.6 388.5 L306.2 378.1 L314.9 367.8 L323.6 357.4 L332.3 347.0 L341.0 336.6 L349.6 326.2 L358.3 315.9 L357.7 315.3 L348.7 325.4 L339.7 335.5 L330.7 345.6 L321.7 355.7 L312.7 365.8 L303.7 375.9 L294.7 386.0 L285.7 396.1 L276.7 406.2 L267.7 416.3 L258.7 426.5 L249.7 436.6 L240.7 446.7 L231.7 456.8 L222.7 466.9 L213.8 477.0 L204.8 487.1 L195.8 497.3 L186.8 507.4 L177.9 517.5 L168.9 527.6 L159.9 537.8 L151.0 547.9 L141.7 557.7 L138.0 553.5Z" fill="#f83a3a"/><path d="M418.8 739.8 L445.1 738.9 L441.9 733.3 L466.7 720.3 L490.8 706.6 L514.9 692.9 L539.0 679.2 L563.1 665.5 L587.2 651.8 L611.3 638.1 L635.4 624.4 L659.5 610.7 L683.6 597.0 L707.6 583.3 L731.7 569.6 L755.8 555.8 L779.9 542.1 L804.0 528.4 L828.1 514.7 L852.1 500.9 L876.2 487.2 L900.3 473.5 L924.4 459.8 L948.5 446.0 L972.5 432.3 L996.6 418.6 L1020.7 404.8 L1020.3 404.2 L996.0 417.5 L971.7 430.8 L947.4 444.2 L923.1 457.5 L898.8 470.9 L874.5 484.2 L850.3 497.6 L826.0 510.9 L801.7 524.3 L777.4 537.6 L753.1 551.0 L728.8 564.3 L704.5 577.7 L680.2 591.1 L656.0 604.4 L631.7 617.8 L607.4 631.1 L583.1 644.5 L558.8 657.9 L534.6 671.3 L510.3 684.6 L486.0 698.0 L461.7 711.4 L438.2 725.5 L434.5 719.9Z" fill="#f83a3a"/></svg>
</body></html>
